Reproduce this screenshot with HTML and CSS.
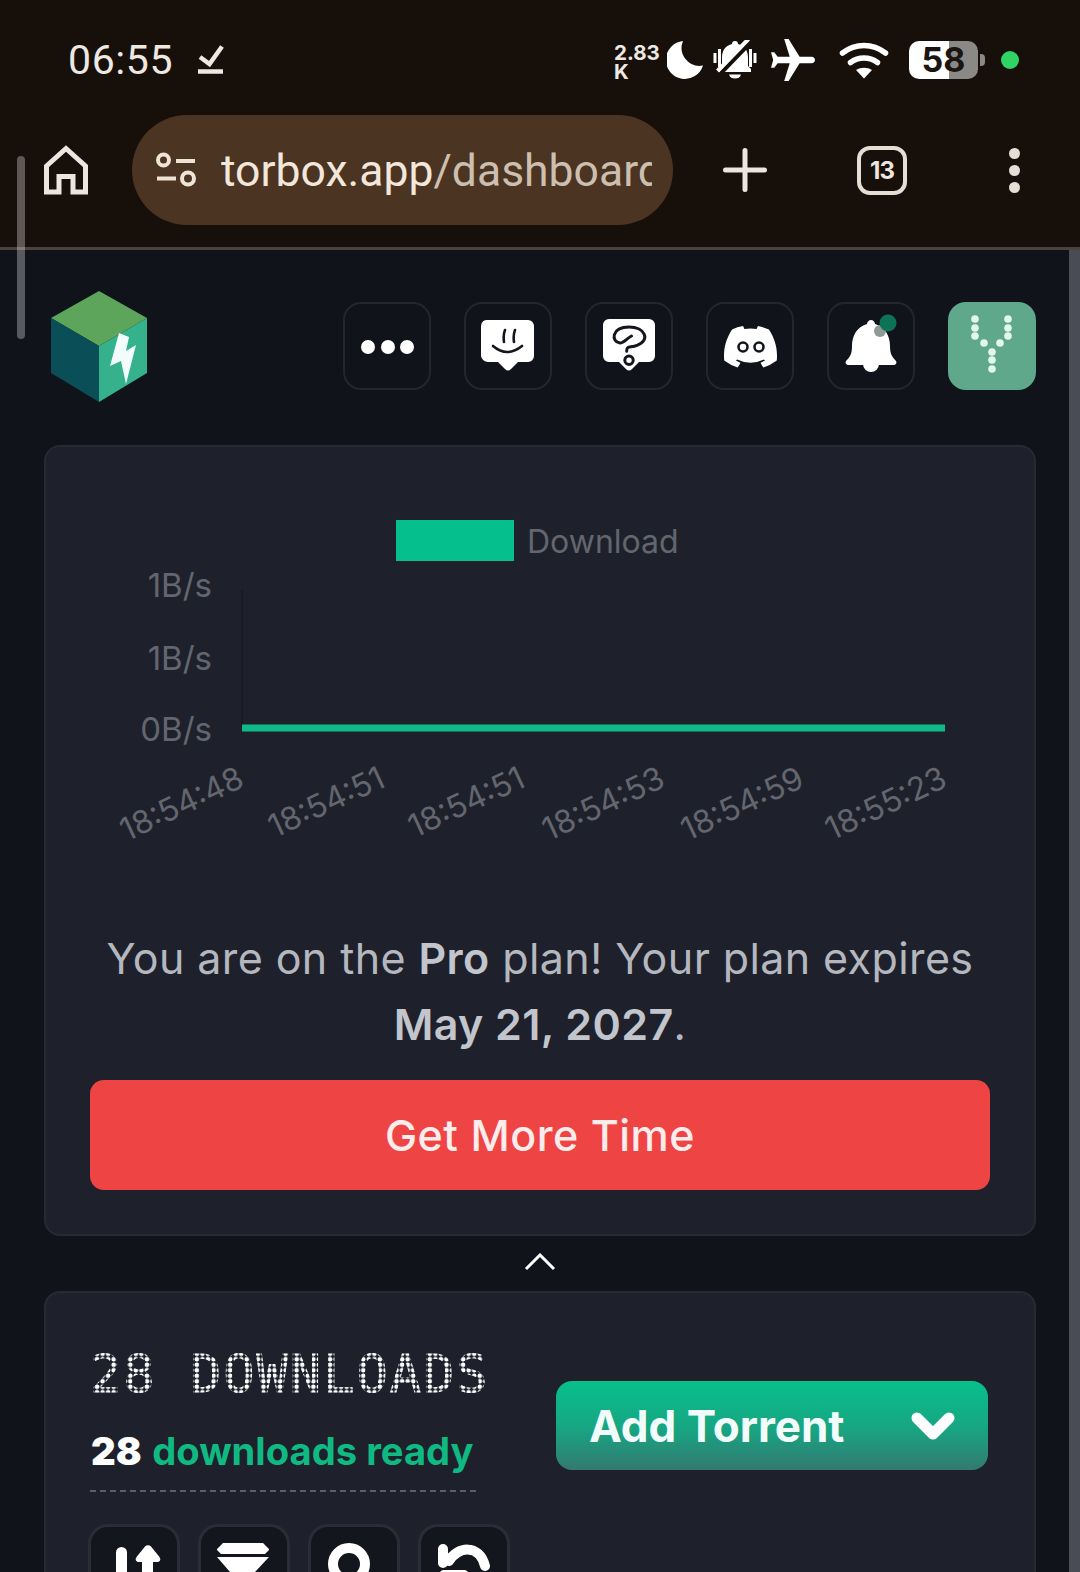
FILE: index.html
```html
<!DOCTYPE html>
<html lang="en">
<head>
<meta charset="utf-8">
<title>TorBox Dashboard</title>
<link rel="stylesheet" href="styles.css">
</head>
<body>
<div class="screen">
  <header class="chrome">
    <div class="status">
      <span class="time">06:55</span>
      <svg class="check" width="26" height="30" viewBox="199 46 26 30"><path class="st-line" d="M201 58l9.500 7L223 47.500"/><path class="st-line" d="M199 72.500h25"/></svg>
      <div class="status-right">
        <div class="speed"><span>2.83</span><span>K</span></div>
        <svg class="moon" width="36" height="38" viewBox="668 42 36 38"><path class="st-fill" d="M684 42A19 19 0 1 0 704 66.500 18 18 0 0 1 684 42Z"/></svg>
        <svg class="mute" width="46" height="40" viewBox="712 41 46 40"><path class="st-fill" d="M735 42c-2 0-3 1-3 3-8 2-10 8-10 14v8l-3 3v3h32v-3l-3-3v-8c0-6-2-12-10-14 0-2-1-3-3-3z"/><path class="st-fill" d="M729 75.500h12c-1 3-3 4-6 4s-5-1-6-4z"/><path class="st-cut" d="M721 74l31-32"/><path class="st-slash" d="M717.500 72l31-32"/><path class="st-line thin" d="M715 54v10M719.500 50v18M750.500 50v18M755 54v10"/></svg>
        <svg class="plane" width="44" height="42" viewBox="1.500 1.500 20 19"><path class="st-fill" transform="rotate(90 12 11.500)" d="M21 16v-2l-8-5V3.500c0-.83-.67-1.500-1.500-1.500S10 2.670 10 3.500V9l-8 5v2l8-2.500V19l-2 1.500V22l3.500-1 3.500 1v-1.500L13 19v-5.500l8 2.500z"/></svg>
        <svg class="wifi" width="50" height="38" viewBox="839 41 50 38"><path class="st-line wide" d="M842.500 53c13-10 30-10 43 0"/><path class="st-line wide" d="M850.500 62.500c8-6 19-6 27 0"/><path class="st-fill" d="M856 70c5-3 11-3 16 0l-8 8.500z"/></svg>
        <div class="battery"><span>58</span></div>
        <i class="battery-tip"></i>
        <i class="cam-dot"></i>
      </div>
    </div>
    <div class="toolbar">
      <svg width="44" height="50" viewBox="44 146 44 50"><path class="tb-line" d="M46.500 193V167L66 149.500 85.500 167v26H73V177.500H59V193z"/></svg>
      <div class="pill">
        <svg width="44" height="36" viewBox="155 152 44 36"><circle class="tb-thin" cx="163.500" cy="160" r="5.500"/><path class="tb-thin" d="M176 161h19M157 178.500h19"/><circle class="tb-thin" cx="188" cy="178.500" r="6"/></svg>
        <div class="url"><span class="url-host">torbox.app</span><span class="url-path">/dashboard</span></div>
      </div>
      <svg class="plus" width="44" height="44" viewBox="0 0 44 44"><path class="tb-round" d="M2.500 22h39M22 2.500v39"/></svg>
      <div class="tabs">13</div>
      <div class="more"><i></i><i></i><i></i></div>
    </div>
  </header>

  <main class="page">
    <div class="topbar">
      <svg class="logo" width="98" height="112" viewBox="50 290 98 112">
        <polygon class="cube-top" points="99,291 147,318 99,346 51,318"/>
        <polygon class="cube-left" points="51,318 99,346 99,402 51,373"/>
        <polygon class="cube-right" points="147,318 147,373 99,402 99,346"/>
        <polygon class="cube-bolt" points="119,333 110,366 121,361 126,384 136,345 126,351 129,337"/>
      </svg>
      <nav class="actions">
        <button class="icon-btn" type="button"><svg class="ico" viewBox="14 14 60 60"><circle class="w" cx="25" cy="45" r="7"/><circle class="w" cx="45" cy="45" r="7"/><circle class="w" cx="64" cy="45" r="7"/></svg></button>
        <button class="icon-btn" type="button"><svg class="ico" viewBox="14 14 60 60"><path class="w" d="M24 18h40a6 6 0 0 1 6 6v30a6 6 0 0 1-6 6H54l-7 7q-3 3-6 0l-7-7H24a7 7 0 0 1-7-6V24a6 6 0 0 1 7-6z"/><path class="k" d="M41 28q-2 5-1 12M51 28q-2 5-1 12M29 44q14 12 29 0"/></svg></button>
        <button class="icon-btn" type="button"><svg class="ico" viewBox="14 14 60 60"><path class="w" d="M24 17h40a6 6 0 0 1 6 6v31a6 6 0 0 1-6 6H54l-7 7q-3 3-6 0l-7-7H24a6 6 0 0 1-6-6V23a6 6 0 0 1 6-6z"/><path class="k heavy" d="M46.500 34C42 36 39 41 35 41 26 40 26 25 44 25 60 25 66 38.300 52 43.300 45 46 41.700 43.300 41.700 49.300"/><circle class="k heavy" cx="44" cy="58.300" r="4.200"/></svg></button>
        <button class="icon-btn" type="button"><svg class="ico" viewBox="14 14 60 60"><path class="w" transform="translate(18 24) scale(.417 .43)" d="M107.700 8.070A105.150 105.150 0 0 0 81.470 0a72.060 72.060 0 0 0-3.360 6.830 97.680 97.680 0 0 0-29.110 0A72.370 72.370 0 0 0 45.640 0a105.890 105.890 0 0 0-26.250 8.090C2.790 32.650-1.710 56.600.54 80.210a105.730 105.730 0 0 0 32.170 16.150 77.700 77.700 0 0 0 6.890-11.110 68.420 68.420 0 0 1-10.850-5.180c.91-.66 1.800-1.340 2.660-2a75.570 75.570 0 0 0 64.320 0c.87.710 1.760 1.390 2.660 2a68.680 68.680 0 0 1-10.870 5.190 77 77 0 0 0 6.890 11.100 105.250 105.250 0 0 0 32.190-16.140c2.640-27.380-4.510-51.110-18.900-72.150z"/><circle class="k" cx="37" cy="45" r="4.500"/><circle class="k" cx="53" cy="45" r="4.500"/></svg></button>
        <button class="icon-btn" type="button"><svg class="ico" viewBox="14 14 60 60"><path class="w" d="M44 18c-2 0-4 2-4 4-11 3-15 13-15 22 0 8-2 11-6 15-1 2 0 4 3 4h44c3 0 4-2 3-4-4-4-6-7-6-15 0-9-4-19-15-22 0-2-2-4-4-4z"/><circle class="w" cx="44" cy="62" r="8"/><circle class="bell-ring" cx="53" cy="29" r="6"/><circle class="bell-dot" cx="61" cy="21" r="8.500"/></svg></button>
        <button class="icon-btn tile" type="button"><svg class="ico" viewBox="14 14 60 60"><circle class="m" cx="27" cy="17" r="3.800"/><circle class="m" cx="27" cy="26" r="3.800"/><circle class="m" cx="27" cy="34" r="3.800"/><circle class="m" cx="60" cy="17" r="3.800"/><circle class="m" cx="60" cy="26" r="3.800"/><circle class="m" cx="60" cy="34" r="3.800"/><circle class="m" cx="36" cy="41" r="3.800"/><circle class="m" cx="52" cy="41" r="3.800"/><circle class="m" cx="44" cy="50" r="3.800"/><circle class="m" cx="44" cy="58" r="3.800"/><circle class="m" cx="44" cy="67" r="3.800"/></svg></button>
      </nav>
    </div>

    <section class="card plan-card">
      <svg class="chart" width="900" height="400" viewBox="90 492 900 400">
        <rect class="legend" x="396" y="520" width="118" height="41"/>
        <text class="lbl" x="527" y="553">Download</text>
        <text class="lbl tick" x="212" y="597">1B/s</text>
        <text class="lbl tick" x="212" y="670">1B/s</text>
        <text class="lbl tick" x="212" y="741">0B/s</text>
        <path class="axis" d="M242 590V728"/>
        <rect class="series" x="242" y="724.500" width="703" height="7"/>
        <text class="lbl end" transform="translate(246 786) rotate(-25)">18:54:48</text>
        <text class="lbl end" transform="translate(387 786) rotate(-25)">18:54:51</text>
        <text class="lbl end" transform="translate(527 786) rotate(-25)">18:54:51</text>
        <text class="lbl end" transform="translate(667 786) rotate(-25)">18:54:53</text>
        <text class="lbl end" transform="translate(806 786) rotate(-25)">18:54:59</text>
        <text class="lbl end" transform="translate(949 786) rotate(-25)">18:55:23</text>
      </svg>
      <p class="plan-text">You are on the <b>Pro</b> plan! Your plan expires <b>May 21, 2027</b>.</p>
      <button class="cta" type="button">Get More Time</button>
    </section>

    <div class="collapse">
      <svg width="32" height="18" viewBox="0 0 32 18"><path class="chev" d="M2 16L16 2l14 14"/></svg>
    </div>

    <section class="card dl-card">
      <div class="dl-head">
        <div class="dl-summary">
          <h2 class="dot-title">28 DOWNLOADS</h2>
          <p class="ready"><b>28</b> <span>downloads ready</span></p>
          <div class="dashes"></div>
        </div>
        <button class="add" type="button"><span>Add Torrent</span><svg width="44" height="32" viewBox="0 0 44 32"><path class="add-chev" d="M6 8l16 16L38 8"/></svg></button>
      </div>
      <div class="tools">
        <button class="tool" type="button"><svg class="tool-ico" viewBox="3 3 84 60"><path class="w" d="M28 28.500a5.500 5.500 0 0 1 11 0V70H28zM48.500 33L57 22.500a4 4 0 0 1 6 0L71.500 33c1.500 2 1 5-2 5H65v32H54V38h-3.500c-3 0-3.500-3-2-5z"/></svg></button>
        <button class="tool" type="button"><svg class="tool-ico" viewBox="3 3 84 60"><path class="w" d="M25 19h40l6 6v1l-4 4H23l-4-4v-1zM19 33h52L57 48v22H32V48z"/></svg></button>
        <button class="tool" type="button"><svg class="tool-ico" viewBox="3 3 84 60"><circle class="tool-ring" cx="41" cy="40" r="16"/></svg></button>
        <button class="tool" type="button"><svg class="tool-ico" viewBox="3 3 84 60"><path class="tool-stroke" d="M25 25v14M31 37c8-14 30-18 36 5M26 51h20"/></svg></button>
      </div>
    </section>
  </main>

  <i class="scroll-left"></i>
  <i class="scroll-right"></i>
</div>
</body>
</html>
```

FILE: styles.css
```css
* { box-sizing: border-box; }
html, body { margin: 0; padding: 0; background: #10131a; }
button { font: inherit; padding: 0; cursor: pointer; }
p, h2 { margin: 0; }
i { display: block; }

.screen {
  position: relative;
  width: 1080px;
  height: 1572px;
  overflow: hidden;
  font-family: Inter, "Liberation Sans", sans-serif;
  color: #fff;
  background: #10131a;
}

/* browser chrome */
.chrome {
  height: 250px;
  background: #17100a;
  border-bottom: 3px solid #4c443c;
}
.status {
  display: flex;
  align-items: center;
  height: 115px;
  padding: 5px 0 0 68px;
}
.time {
  font-family: Roboto, sans-serif;
  font-size: 41px;
  letter-spacing: 0.6px;
  color: #eee8e2;
}
.check { margin-left: 25px; }
.status-right {
  display: flex;
  align-items: center;
  margin-left: auto;
  padding-right: 61px;
}
.status-right svg { display: block; }
.speed {
  display: flex;
  flex-direction: column;
  width: 46px;
  padding-top: 4px;
  font-size: 20.500px;
  font-weight: 700;
  line-height: 19px;
  color: #eee8e2;
}
.moon { margin-left: 7px; }
.mute { margin-left: 9px; }
.plane { margin-left: 13px; }
.wifi { margin-left: 24px; }
.battery {
  display: flex;
  align-items: center;
  justify-content: center;
  width: 69px;
  height: 38px;
  margin-left: 20px;
  border-radius: 10px;
  background: linear-gradient(90deg, #fff 0 58%, #8b8986 58%);
  font-size: 34px;
  font-weight: 700;
  color: #1a1512;
  line-height: 1;
}
.battery-tip {
  width: 5px;
  height: 12px;
  margin-left: 2px;
  border-radius: 0 4px 4px 0;
  background: #8b8986;
}
.cam-dot {
  width: 18px;
  height: 18px;
  margin-left: 16px;
  border-radius: 50%;
  background: #2fd465;
}
.st-line { fill: none; stroke: #eee8e2; stroke-width: 4.500; }
.st-line.thin { stroke-width: 3; stroke: #fff; }
.st-line.wide { stroke-width: 5.500; stroke-linecap: round; stroke: #fff; }
.st-fill { fill: #fff; }
.st-cut { fill: none; stroke: #17100a; stroke-width: 4; }
.st-slash { fill: none; stroke: #fff; stroke-width: 4; }

.toolbar {
  display: flex;
  align-items: center;
  height: 110px;
  padding-left: 44px;
}
.tb-line { fill: none; stroke: #eee6de; stroke-width: 5; }
.tb-thin { fill: none; stroke: #efe3d6; stroke-width: 4; }
.tb-round { fill: none; stroke: #eee6de; stroke-width: 5; stroke-linecap: round; }
.pill {
  display: flex;
  align-items: center;
  width: 541px;
  height: 110px;
  margin-left: 44px;
  padding-left: 23px;
  border-radius: 55px;
  background: #4b3422;
}
.url {
  width: 431px;
  margin: 2px 0 0 22px;
  overflow: hidden;
  white-space: nowrap;
  font-family: Roboto, sans-serif;
  font-size: 44.500px;
  line-height: 60px;
}
.url-host { color: #f2e7da; }
.url-path { color: #cdbfb0; }
.plus { margin-left: 50px; }
.tabs {
  display: flex;
  align-items: center;
  justify-content: center;
  width: 50px;
  height: 49px;
  margin-left: 90px;
  border: 4.500px solid #e6ddd4;
  border-radius: 13px;
  font-size: 24px;
  font-weight: 700;
  letter-spacing: -1px;
  color: #eee6de;
}
.more {
  display: flex;
  flex-direction: column;
  gap: 6px;
  margin-left: 102px;
}
.more i {
  width: 11px;
  height: 11px;
  border-radius: 50%;
  background: #e6ddd4;
}

/* page */
.page { padding: 0 44px; }
.topbar {
  display: flex;
  align-items: flex-start;
  justify-content: space-between;
  height: 195px;
  padding: 40px 0 0 6px;
}
.actions {
  display: flex;
  gap: 33px;
  margin-top: 12px;
}
.icon-btn {
  display: flex;
  align-items: center;
  justify-content: center;
  width: 88px;
  height: 88px;
  border: 2px solid #23262f;
  border-radius: 18px;
  background: #10131a;
}
.icon-btn.tile {
  border: 0;
  background: #5fa88c;
}
.ico { display: block; width: 60px; height: 60px; overflow: visible; }
.w { fill: #fff; }
.m { fill: #e4f7ef; }
.k { fill: none; stroke: #14161d; stroke-width: 2.600; stroke-linecap: round; }
.k.heavy { stroke-width: 3; }
.bell-ring { fill: #8e9a97; }
.bell-dot { fill: #0e7356; }
.cube-top { fill: #5ca55a; }
.cube-left { fill: #0a4f57; }
.cube-right { fill: #35b28c; }
.cube-bolt { fill: #f2fdfb; }

.card {
  width: 992px;
  padding: 44px;
  border: 2px solid #262a35;
  border-radius: 16px;
  background: #1e212c;
}
.plan-card { height: 791px; padding-top: 45px; }
.chart { display: block; margin-bottom: 33px; }
.legend { fill: #05c08c; }
.series { fill: #10b98a; }
.axis { fill: none; stroke: #171a22; stroke-width: 2; }
.lbl {
  font-family: Inter, sans-serif;
  font-size: 32px;
  fill: #63666e;
}
.lbl.tick { font-size: 33px; text-anchor: end; }
.lbl.end { text-anchor: end; }
.plan-text {
  font-size: 43px;
  line-height: 66px;
  text-align: center;
  letter-spacing: 0.4px;
  color: #b4b7be;
}
.plan-text b { font-weight: 600; color: #c2c5cb; }
.cta {
  display: block;
  width: 100%;
  height: 110px;
  margin-top: 23px;
  border: 0;
  border-radius: 14px;
  background: #ef4444;
  font-size: 43px;
  font-weight: 500;
  letter-spacing: 0.5px;
  color: #fdecec;
}
.collapse {
  display: flex;
  align-items: center;
  justify-content: center;
  height: 55px;
  padding-bottom: 3px;
}
.chev { fill: none; stroke: #fff; stroke-width: 3; }

.dl-card { height: 400px; padding-top: 61px; }
.dl-head { display: flex; justify-content: space-between; }
.dl-summary { width: 386px; }
.dot-title {
  width: 410px;
  margin-top: -3px;
  font-family: "DejaVu Sans Mono", monospace;
  font-size: 52px;
  font-weight: 400;
  line-height: 46px;
  letter-spacing: 2px;
  white-space: nowrap;
  color: #fff;
  -webkit-text-stroke: 1px #fff;
  -webkit-mask-image: radial-gradient(circle at center, #000 2px, transparent 2.600px);
  mask-image: radial-gradient(circle at center, #000 2px, transparent 2.600px);
  -webkit-mask-size: 5.550px 5.500px;
  mask-size: 5.550px 5.500px;
  -webkit-mask-position: -1.300px 0;
  mask-position: -1.300px 0;
}
.ready {
  margin-top: 30px;
  padding-left: 1px;
  font-size: 38.200px;
  font-weight: 700;
  line-height: 48px;
  white-space: nowrap;
}
.ready b { margin-right: 1.500px; }
.ready span { color: #10b981; }
.dashes {
  height: 0;
  margin-top: 15px;
  border-top: 2px dashed #5b5e68;
}
.add {
  display: flex;
  align-items: center;
  justify-content: space-between;
  width: 432px;
  height: 89px;
  margin: 27px 2px 0 0;
  padding: 0 33px 0 33px;
  border: 0;
  border-radius: 16px;
  background: linear-gradient(180deg, #07c08c 0%, #18a482 55%, #33796f 100%);
  font-size: 44px;
  font-weight: 700;
  color: #f2fdfb;
}
.add-chev { fill: none; stroke: #fff; stroke-width: 11; stroke-linecap: round; stroke-linejoin: round; }
.tools {
  display: flex;
  gap: 18px;
  margin: 32px 0 0 -2px;
}
.tool {
  display: flex;
  flex: none;
  align-items: flex-start;
  width: 92px;
  height: 92px;
  border: 3px solid #2a2d37;
  border-radius: 20px;
  background: #14161d;
}
.tool-ico { display: block; width: 84px; height: 60px; }
.tool-ring { fill: none; stroke: #fff; stroke-width: 10; }
.tool-stroke { fill: none; stroke: #fff; stroke-width: 10; stroke-linecap: round; stroke-linejoin: round; }

/* overlay scrollbars */
.scroll-left {
  position: absolute;
  left: 17px;
  top: 156px;
  width: 8px;
  height: 183px;
  border-radius: 4px;
  background: rgba(255, 255, 255, 0.3);
}
.scroll-right {
  position: absolute;
  top: 250px;
  right: 0;
  bottom: 0;
  width: 11px;
  background: #4a4c55;
}
```
